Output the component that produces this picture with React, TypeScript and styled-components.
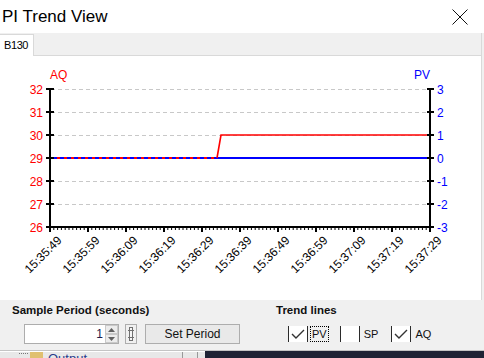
import React from 'react';
import styled, { createGlobalStyle } from 'styled-components';

const GlobalStyle = createGlobalStyle`
  html, body {
    margin: 0;
    padding: 0;
    background: #f0f0f0;
  }
  body {
    font-family: "Liberation Sans", Arial, sans-serif;
    overflow: hidden;
  }
`;

// chart geometry, in page pixels
const AXIS_L = 50;
const AXIS_R = 430;
const TOP = 89;
const BOTTOM = 227;
const UNIT = 23;
const STEP_X = 38;

const leftValues = [32, 31, 30, 29, 28, 27, 26];
const rightValues = [3, 2, 1, 0, -1, -2, -3];
const yLeft = (v: number) => TOP + (32 - v) * UNIT;
const yRight = (v: number) => TOP + (3 - v) * UNIT;

const pad = (n: number) => String(n).padStart(2, '0');
const timeLabel = (i: number) => {
  const t = 15 * 3600 + 35 * 60 + 49 + i * 10;
  return `${pad(Math.floor(t / 3600))}:${pad(Math.floor((t % 3600) / 60))}:${pad(t % 60)}`;
};

const TrendChart: React.FC = () => {
  const minor = Array.from({ length: 101 }, (_, s) => s);
  const majors = Array.from({ length: 11 }, (_, i) => i);

  return (
    <ChartSvg width={481} height={244} viewBox="0 56 481 244">
      {leftValues.slice(0, 6).map((v) => (
        <line
          key={v}
          x1={AXIS_L + 1}
          x2={AXIS_R - 1}
          y1={yLeft(v) + 0.5}
          y2={yLeft(v) + 0.5}
          stroke="#c8c8c8"
          strokeDasharray="4 3"
        />
      ))}

      <line x1={AXIS_L} x2={AXIS_R} y1={158} y2={158} stroke="#0000ff" strokeWidth={2} />
      <line x1={AXIS_L} x2={217} y1={158} y2={158} stroke="#ff0000" strokeWidth={2} strokeDasharray="3 4" />
      <polyline points="217,158 221,135 430,135" fill="none" stroke="#ff0000" strokeWidth={1.6} />

      <line x1={AXIS_L} x2={AXIS_L} y1={TOP - 1} y2={BOTTOM + 1} stroke="#000" strokeWidth={2} />
      <line x1={AXIS_R} x2={AXIS_R} y1={TOP - 1} y2={BOTTOM + 1} stroke="#000" strokeWidth={2} />
      <line x1={AXIS_L - 1} x2={AXIS_R + 1} y1={BOTTOM} y2={BOTTOM} stroke="#000" strokeWidth={2} />

      {leftValues.map((v) => (
        <g key={`l${v}`}>
          <line x1={AXIS_L - 4} x2={AXIS_L + 4} y1={yLeft(v)} y2={yLeft(v)} stroke="#000" strokeWidth={2} />
          <text x={43} y={yLeft(v) + 4.5} textAnchor="end" fill="#ff0000">
            {v}
          </text>
        </g>
      ))}
      {rightValues.map((v) => (
        <g key={`r${v}`}>
          <line x1={AXIS_R - 3} x2={AXIS_R + 4} y1={yRight(v)} y2={yRight(v)} stroke="#000" strokeWidth={2} />
          <text x={437} y={yRight(v) + 4.5} fill="#0000ff">
            {v}
          </text>
        </g>
      ))}

      {minor.map((s) => {
        const x = AXIS_L + s * (STEP_X / 10);
        return (
          <line
            key={`m${s}`}
            x1={x}
            x2={x}
            y1={BOTTOM}
            y2={s % 10 === 0 ? BOTTOM + 5 : BOTTOM + 3}
            stroke="#000"
            strokeWidth={s % 10 === 0 ? 2 : 1}
          />
        );
      })}
      {majors.map((i) => {
        const ax = AXIS_L + i * STEP_X + 12.5;
        return (
          <text
            key={`t${i}`}
            x={ax}
            y={241}
            textAnchor="end"
            fontSize={10.5}
            fill="#000"
            transform={`rotate(-45 ${ax} 241)`}
          >
            {timeLabel(i)}
          </text>
        );
      })}

      <text x={AXIS_L} y={79} fill="#ff0000">
        AQ
      </text>
      <text x={AXIS_R} y={79} textAnchor="end" fill="#0000ff">
        PV
      </text>
    </ChartSvg>
  );
};

const CloseIcon = () => (
  <svg width={16} height={16} viewBox="0 0 16 16">
    <path d="M0.5 0.5 L15.5 15.5 M15.5 0.5 L0.5 15.5" stroke="#111" strokeWidth={1} fill="none" />
  </svg>
);

const Check = () => (
  <svg width={14} height={10} viewBox="0 0 14 10">
    <path d="M1 5 L5 9 L13 1" stroke="#333" strokeWidth={1.4} fill="none" />
  </svg>
);

const SpinArrow: React.FC<{ down?: boolean }> = ({ down }) => (
  <svg width={7} height={4} viewBox="0 0 7 4">
    <polygon points={down ? '0,0 7,0 3.5,4' : '0,4 7,4 3.5,0'} fill="#606060" />
  </svg>
);

const TrackIcon = () => (
  <svg width={12} height={20} viewBox="0 0 12 20">
    <rect x={0.5} y={0.5} width={11} height={19} fill="none" stroke="#adadad" />
    <rect x={4.5} y={3.5} width={3} height={13} fill="#f5f5f5" stroke="#707070" />
    <path d="M3 6.5 H9 M3 13.5 H9" stroke="#707070" />
  </svg>
);

interface TrendOption {
  name: string;
  checked: boolean;
  focused?: boolean;
}

const trendOptions: TrendOption[] = [
  { name: 'PV', checked: true, focused: true },
  { name: 'SP', checked: false },
  { name: 'AQ', checked: true },
];

const App: React.FC = () => {
  return (
    <Window>
      <GlobalStyle />
      <TitleBar>
        <Title>PI Trend View</Title>
        <CloseIcon />
      </TitleBar>

      <TabStrip>
        <Tab>B130</Tab>
        <TabFiller />
      </TabStrip>

      <Panel>
        <TrendChart />
      </Panel>

      <Controls>
        <Group $width={264}>
          <GroupLabel>Sample Period (seconds)</GroupLabel>
          <Row>
            <NumberBox>
              <NumberValue>1</NumberValue>
              <SpinColumn>
                <SpinButton>
                  <SpinArrow />
                </SpinButton>
                <SpinButton>
                  <SpinArrow down />
                </SpinButton>
              </SpinColumn>
            </NumberBox>
            <TrackIcon />
            <Button>Set Period</Button>
          </Row>
        </Group>
        <Group $width={200}>
          <GroupLabel>Trend lines</GroupLabel>
          <Row>
            {trendOptions.map((o) => (
              <CheckItem key={o.name}>
                <CheckBox>{o.checked && <Check />}</CheckBox>
                <CheckLabel $focused={o.focused}>{o.name}</CheckLabel>
              </CheckItem>
            ))}
          </Row>
        </Group>
      </Controls>

      <Footer>
        <OutputPane>
          <Dots />
          <OutputIcon />
          <OutputText>Output</OutputText>
          <Splitter />
        </OutputPane>
        <DarkPane />
      </Footer>
    </Window>
  );
};

export default App;

const Window = styled.div`
  width: 484px;
  height: 358px;
  display: flex;
  flex-direction: column;
  background: #f0f0f0;
  overflow: hidden;
`;

const TitleBar = styled.div`
  height: 33px;
  flex: none;
  display: flex;
  align-items: center;
  justify-content: space-between;
  box-sizing: border-box;
  padding: 0 16px 0 2px;
  background: #fff;
`;

const Title = styled.div`
  font-size: 17px;
  color: #000;
`;

const TabStrip = styled.div`
  height: 23px;
  flex: none;
  display: flex;
  padding-right: 2px;
  background: #f0f0f0;
`;

const Tab = styled.div`
  width: 34px;
  height: 22px;
  margin-top: 1px;
  box-sizing: border-box;
  padding: 4px 0 0 4px;
  border-right: 1px solid #d9d9d9;
  border-top: 1px solid #d9d9d9;
  background: #fff;
  font-size: 11px;
  line-height: 13px;
  letter-spacing: -0.4px;
  color: #000;
`;

const TabFiller = styled.div`
  flex: 1;
  border-bottom: 1px solid #d9d9d9;
  border-right: 1px solid #d9d9d9;
`;

const Panel = styled.div`
  width: 482px;
  height: 244px;
  flex: none;
  box-sizing: border-box;
  border-right: 1px solid #d9d9d9;
  background: #fff;
`;

const ChartSvg = styled.svg`
  display: block;
  text {
    font-family: "Liberation Sans", Arial, sans-serif;
    font-size: 12px;
  }
`;

const Controls = styled.div`
  height: 50px;
  flex: none;
  display: flex;
  box-sizing: border-box;
  padding: 3px 0 0 12px;
  background: #f0f0f0;
`;

const Group = styled.div<{ $width: number }>`
  width: ${(p) => p.$width}px;
  display: flex;
  flex-direction: column;
`;

const GroupLabel = styled.div`
  font-size: 11.5px;
  font-weight: bold;
  line-height: 15px;
  color: #111;
`;

const Row = styled.div`
  height: 20px;
  margin: 6px 0 0 12px;
  display: flex;
  align-items: center;
`;

const NumberBox = styled.div`
  width: 95px;
  height: 20px;
  box-sizing: border-box;
  display: flex;
  border: 1px solid #adadad;
  background: #fff;
  margin-right: 6px;
`;

const NumberValue = styled.div`
  flex: 1;
  text-align: right;
  padding-right: 2px;
  font-size: 12px;
  line-height: 18px;
  color: #1a1a4a;
`;

const SpinColumn = styled.div`
  width: 13px;
  display: flex;
  flex-direction: column;
`;

const SpinButton = styled.div`
  flex: 1;
  display: flex;
  align-items: center;
  justify-content: center;
  border: 1px solid #c9c9c9;
  background: #ececec;
`;

const Button = styled.div`
  width: 95px;
  height: 20px;
  margin-left: 8px;
  box-sizing: border-box;
  display: flex;
  align-items: center;
  justify-content: center;
  border: 1px solid #adadad;
  background: #e9e9e9;
  font-size: 12px;
  color: #111;
`;

const CheckItem = styled.div`
  display: flex;
  align-items: center;
  margin-right: 12px;
`;

const CheckBox = styled.div`
  width: 20px;
  height: 16px;
  box-sizing: border-box;
  display: flex;
  align-items: center;
  justify-content: center;
  border-left: 1px solid #2b2b2b;
  border-right: 1px solid #2b2b2b;
  background: #fff;
  margin-right: 3px;
`;

const CheckLabel = styled.span<{ $focused?: boolean }>`
  font-size: 11px;
  line-height: 14px;
  padding: 0 1px;
  color: #111;
  outline: ${(p) => (p.$focused ? '1px dotted #000' : 'none')};
`;

const Footer = styled.div`
  height: 8px;
  flex: none;
  display: flex;
  border-top: 1px solid #c4c4c4;
  overflow: hidden;
`;

const OutputPane = styled.div`
  width: 205px;
  display: flex;
  align-items: flex-start;
  box-sizing: border-box;
  border-top: 1px solid #fff;
  background: #e8e8e8;
  overflow: hidden;
`;

const Dots = styled.div`
  width: 9px;
  margin: 1px 2px 0 19px;
  border-top: 1px dotted #777;
`;

const OutputIcon = styled.div`
  width: 13px;
  height: 6px;
  background: #e0c070;
  margin-right: 5px;
`;

const OutputText = styled.div`
  font-size: 13px;
  line-height: 13px;
  margin-top: 0;
  color: #2a3a8a;
`;

const Splitter = styled.div`
  width: 14px;
  height: 7px;
  margin-left: auto;
  margin-right: 7px;
  border-left: 1px solid #999;
  border-right: 1px solid #999;
`;

const DarkPane = styled.div`
  flex: 1;
  background: #1f2335;
`;
